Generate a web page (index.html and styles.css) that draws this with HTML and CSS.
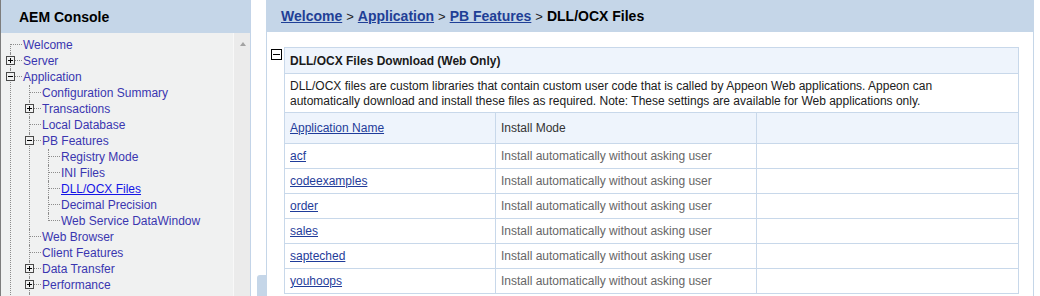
FILE: index.html
```html
<!DOCTYPE html>
<html>
<head>
<meta charset="utf-8">
<title>AEM Console</title>
<link rel="stylesheet" href="styles.css">
</head>
<body>
<div class="page">
  <aside class="nav">
    <div class="nav-head">AEM Console</div>
    <div class="nav-body">
      <div class="tree-wrap">
        <ul class="tree">
          <li class="first"><div class="row"><i class="conn"></i><a class="item">Welcome</a></div></li>
          <li><div class="row"><i class="box plus"></i><i class="conn short"></i><a class="item">Server</a></div></li>
          <li><div class="row"><i class="box minus"></i><i class="conn short"></i><a class="item">Application</a></div>
            <ul class="tree">
              <li><div class="row"><i class="conn"></i><a class="item">Configuration Summary</a></div></li>
              <li><div class="row"><i class="box plus"></i><i class="conn short"></i><a class="item">Transactions</a></div></li>
              <li><div class="row"><i class="conn"></i><a class="item">Local Database</a></div></li>
              <li><div class="row"><i class="box minus"></i><i class="conn short"></i><a class="item">PB Features</a></div>
                <ul class="tree">
                  <li><div class="row"><i class="conn"></i><a class="item">Registry Mode</a></div></li>
                  <li><div class="row"><i class="conn"></i><a class="item">INI Files</a></div></li>
                  <li><div class="row"><i class="conn"></i><a class="item selected">DLL/OCX Files</a></div></li>
                  <li><div class="row"><i class="conn"></i><a class="item">Decimal Precision</a></div></li>
                  <li class="last"><div class="row"><i class="conn"></i><a class="item">Web Service DataWindow</a></div></li>
                </ul>
              </li>
              <li><div class="row"><i class="conn"></i><a class="item">Web Browser</a></div></li>
              <li><div class="row"><i class="conn"></i><a class="item">Client Features</a></div></li>
              <li><div class="row"><i class="box plus"></i><i class="conn short"></i><a class="item">Data Transfer</a></div></li>
              <li><div class="row"><i class="box plus"></i><i class="conn short"></i><a class="item">Performance</a></div></li>
              <li><div class="row"><i class="box plus"></i><i class="conn short"></i></div></li>
            </ul>
          </li>
        </ul>
      </div>
      <div class="vscroll"><span class="arrow-up"></span></div>
    </div>
  </aside>

  <div class="splitter"><span class="grip"></span></div>

  <main class="content">
    <div class="crumb">
      <a class="crumb-link">Welcome</a><span class="sep">&gt;</span>
      <a class="crumb-link">Application</a><span class="sep">&gt;</span>
      <a class="crumb-link">PB Features</a><span class="sep">&gt;</span>
      <span class="crumb-current">DLL/OCX Files</span>
    </div>
    <div class="sect">
      <i class="collapse"></i>
      <table class="grid">
        <colgroup><col class="c1"><col class="c2"><col class="c3"></colgroup>
        <tr class="title"><th colspan="3">DLL/OCX Files Download (Web Only)</th></tr>
        <tr class="desc"><td colspan="3">DLL/OCX files are custom libraries that contain custom user code that is called by Appeon Web applications. Appeon can<br>automatically download and install these files as required. Note: These settings are available for Web applications only.</td></tr>
        <tr class="head"><td><a class="link">Application Name</a></td><td class="mode-head">Install Mode</td><td></td></tr>
        <tr class="data"><td><a class="link">acf</a></td><td class="mode">Install automatically without asking user</td><td></td></tr>
        <tr class="data"><td><a class="link">codeexamples</a></td><td class="mode">Install automatically without asking user</td><td></td></tr>
        <tr class="data"><td><a class="link">order</a></td><td class="mode">Install automatically without asking user</td><td></td></tr>
        <tr class="data"><td><a class="link">sales</a></td><td class="mode">Install automatically without asking user</td><td></td></tr>
        <tr class="data"><td><a class="link">sapteched</a></td><td class="mode">Install automatically without asking user</td><td></td></tr>
        <tr class="data"><td><a class="link">youhoops</a></td><td class="mode">Install automatically without asking user</td><td></td></tr>
      </table>
    </div>
  </main>
</div>
</body>
</html>
```

FILE: styles.css
```css
html, body {
  margin: 0;
  padding: 0;
  background: #ffffff;
}
body {
  width: 1040px;
  height: 296px;
  overflow: hidden;
  font-family: "Liberation Sans", Arial, sans-serif;
  font-size: 12px;
}
.page {
  display: flex;
  height: 296px;
}

/* ---------- left navigation ---------- */
.nav {
  width: 251px;
  box-sizing: border-box;
  border-left: 1px solid #7d7d7d;
  border-right: 1px solid #c3d4e8;
  display: flex;
  flex-direction: column;
  flex: none;
  overflow: hidden;
}
.nav-head {
  height: 33px;
  flex: none;
  background: #c5d6e8;
  display: flex;
  align-items: center;
  padding-left: 18px;
  font-weight: bold;
  font-size: 14px;
  color: #000;
}
.nav-body {
  flex: 1;
  display: flex;
  background: #f0f1f1;
  overflow: hidden;
}
.tree-wrap {
  flex: 1;
  padding: 4px 0 0 9px;
  overflow: hidden;
}
.tree {
  list-style: none;
  margin: 0;
  padding: 0;
}
.tree .tree {
  padding-left: 18px;
}
.tree li {
  border-left: 1px dotted #8c8c8c;
}
.tree li.first,
.tree li.last {
  border-left-color: transparent;
}
.row {
  display: flex;
  align-items: flex-start;
  height: 16px;
  line-height: 16px;
  white-space: nowrap;
}
.conn {
  flex: none;
  width: 11px;
  height: 7px;
  border-bottom: 1px dotted #8c8c8c;
  margin-right: 1px;
}
.conn.short {
  width: 7px;
}
.first > .row > .conn {
  margin-left: -1px;
  width: 11px;
  height: 8px;
  margin-top: 7px;
  border-bottom: none;
  border-top: 1px dotted #8c8c8c;
  border-left: 1px dotted #8c8c8c;
}
.last > .row > .conn {
  margin-left: -1px;
  width: 11px;
  border-left: 1px dotted #8c8c8c;
}
.box {
  flex: none;
  width: 9px;
  height: 9px;
  box-sizing: border-box;
  margin-left: -5px;
  margin-top: 3px;
  border: 1px solid #4a4a4a;
  background: #f0f1f1;
}
.box.plus {
  background:
    linear-gradient(#000, #000) center / 5px 1px no-repeat,
    linear-gradient(#000, #000) center / 1px 5px no-repeat,
    #f0f1f1;
}
.box.minus {
  background:
    linear-gradient(#000, #000) center / 5px 1px no-repeat,
    #f0f1f1;
}
.item {
  color: #3a36b0;
  text-decoration: none;
}
.item.selected {
  color: #1414e6;
  text-decoration: underline;
}
.vscroll {
  width: 16px;
  flex: none;
  border-left: 1px solid #f8f8f8;
  background: #ebebeb;
  display: flex;
  justify-content: center;
}
.arrow-up {
  width: 0;
  height: 0;
  margin-top: 9px;
  margin-left: 1px;
  border-left: 3px solid transparent;
  border-right: 3px solid transparent;
  border-bottom: 4px solid #a2a2a2;
}

/* ---------- splitter ---------- */
.splitter {
  width: 15px;
  flex: none;
  display: flex;
  flex-direction: column;
  justify-content: flex-end;
  align-items: flex-end;
}
.grip {
  width: 9px;
  height: 21px;
  background: #c5d6e8;
  border-top-left-radius: 3px;
}

/* ---------- right content ---------- */
.content {
  width: 768px;
  flex: none;
  box-sizing: border-box;
  border-left: 1px solid #c5d6e8;
  border-right: 1px solid #c5d6e8;
  display: flex;
  flex-direction: column;
}
.crumb {
  height: 32px;
  flex: none;
  background: #c5d6e8;
  display: flex;
  align-items: center;
  padding-left: 14px;
  font-size: 14px;
  font-weight: bold;
  white-space: nowrap;
}
.crumb-link {
  color: #1f3f96;
  text-decoration: underline;
}
.sep {
  color: #222;
  font-size: 13px;
  font-weight: normal;
  margin: 0 4px;
}
.crumb-current {
  color: #000;
}
.sect {
  display: flex;
  align-items: flex-start;
  gap: 2px;
  padding: 15px 0 0 4px;
}
.collapse {
  flex: none;
  width: 11px;
  height: 11px;
  box-sizing: border-box;
  margin-top: 2px;
  border: 1px solid #000;
  background: linear-gradient(#000, #000) center / 7px 1px no-repeat, #fff;
}
.grid {
  border-collapse: collapse;
  table-layout: fixed;
  width: 735px;
  color: #222;
}
.c1 { width: 211px; }
.c2 { width: 261px; }
.grid th,
.grid td {
  border: 1px solid #c8d8ea;
  padding: 0 5px;
  text-align: left;
  white-space: nowrap;
}
.title { height: 26px; }
.desc { height: 39px; }
.head { height: 31px; }
.data { height: 25px; }
.title th {
  background: #eef4fc;
  font-weight: bold;
  color: #1a1a1a;
}
.desc td {
  line-height: 15px;
  padding-top: 1px;
  color: #202020;
}
.head td {
  background: #eef4fc;
}
.link {
  color: #1f3c9a;
  text-decoration: underline;
}
.mode-head {
  color: #333;
}
.mode {
  color: #666;
}
```
